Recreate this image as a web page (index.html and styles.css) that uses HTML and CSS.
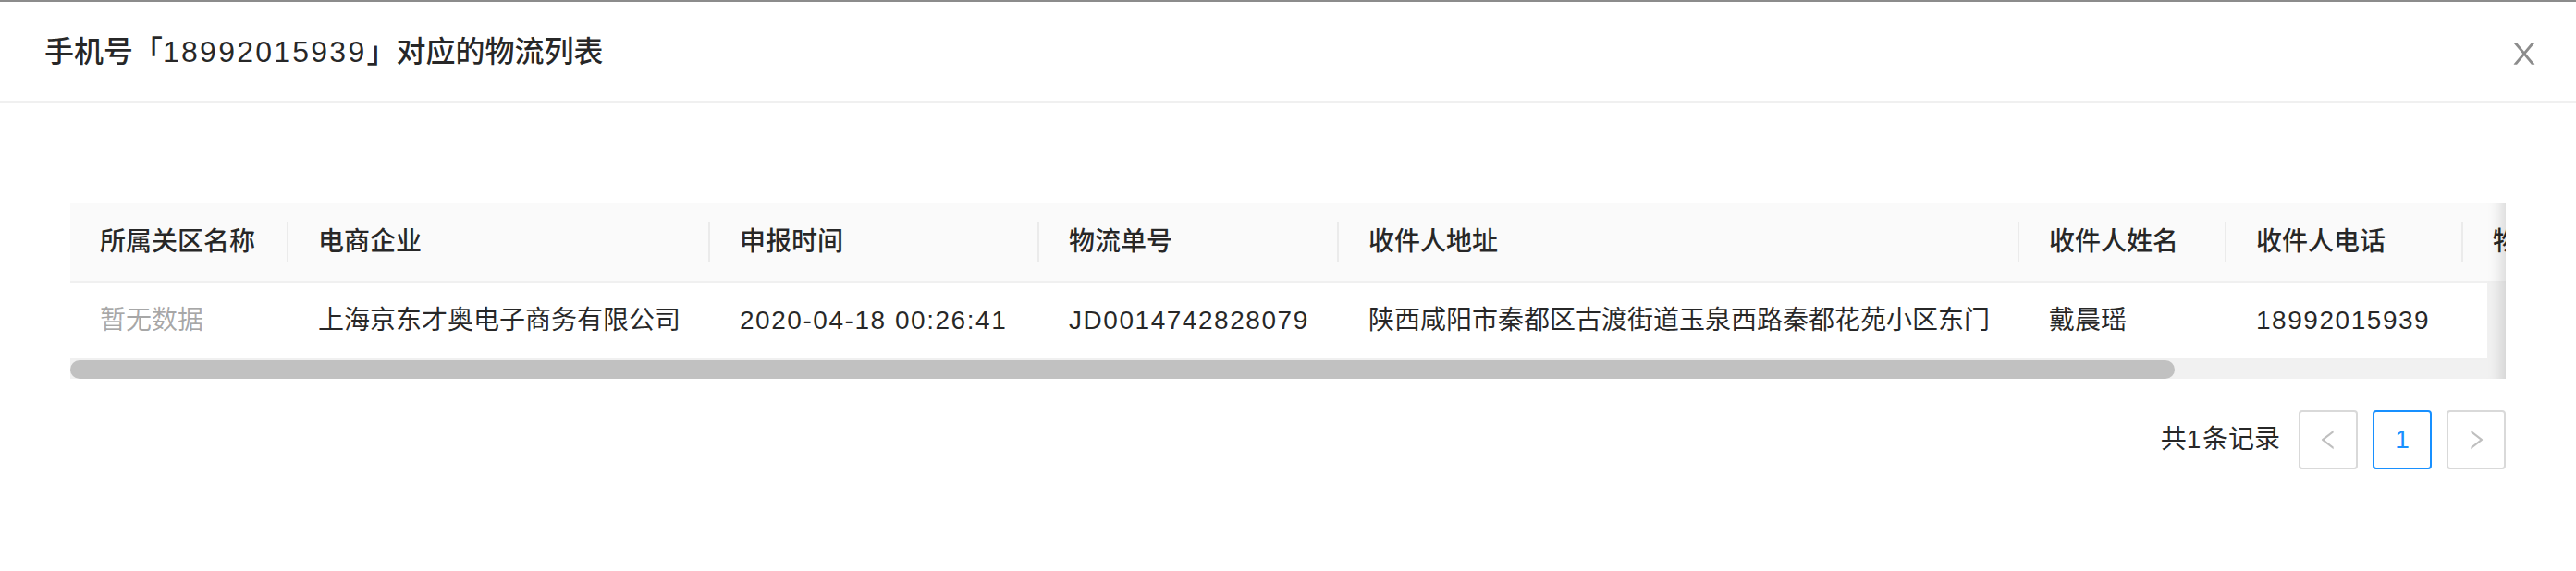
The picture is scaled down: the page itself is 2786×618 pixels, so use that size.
FILE: index.html
```html
<!DOCTYPE html>
<html lang="zh-CN">
<head>
<meta charset="utf-8">
<title>物流列表</title>
<link rel="stylesheet" href="styles.css">
</head>
<body>
<div class="topline"></div>
<div class="modal">
  <div class="modal-header">
    <div class="modal-title">手机号「<span class="num">18992015939</span>」对应的物流列表</div>
    <button class="modal-close" aria-label="Close">
      <svg viewBox="64 64 896 896" width="32" height="32"><path d="M563.8 512l262.5-312.9c4.4-5.2.7-13.1-6.1-13.1h-79.8c-4.7 0-9.2 2.1-12.3 5.7L511.6 449.8 295.1 191.7c-3-3.6-7.5-5.7-12.3-5.7H203c-6.8 0-10.5 7.9-6.1 13.1L459.4 512 196.9 824.9A7.95 7.95 0 00203 838h79.8c4.7 0 9.2-2.1 12.3-5.7l216.5-258.1 216.5 258.1c3 3.6 7.5 5.7 12.3 5.7h79.8c6.8 0 10.5-7.9 6.1-13.1L563.8 512z"/></svg>
    </button>
  </div>
  <div class="modal-body">
    <div class="table">
      <div class="thead">
        <table class="grid">
          <colgroup>
            <col class="c1"><col class="c2"><col class="c3"><col class="c4"><col class="c5"><col class="c6"><col class="c7"><col class="c8">
          </colgroup>
          <tr>
            <th>所属关区名称</th>
            <th>电商企业</th>
            <th>申报时间</th>
            <th>物流单号</th>
            <th>收件人地址</th>
            <th>收件人姓名</th>
            <th>收件人电话</th>
            <th>物流企业名称</th>
          </tr>
        </table>
      </div>
      <div class="tbody-row">
        <div class="tbody">
          <table class="grid">
            <colgroup>
              <col class="c1"><col class="c2"><col class="c3"><col class="c4"><col class="c5"><col class="c6"><col class="c7"><col class="c8">
            </colgroup>
            <tr>
              <td class="empty">暂无数据</td>
              <td>上海京东才奥电子商务有限公司</td>
              <td><span class="num">2020-04-18 00:26:41</span></td>
              <td><span class="num">JD0014742828079</span></td>
              <td>陕西咸阳市秦都区古渡街道玉泉西路秦都花苑小区东门</td>
              <td>戴晨瑶</td>
              <td><span class="num">18992015939</span></td>
              <td></td>
            </tr>
          </table>
        </div>
        <div class="vbar"></div>
      </div>
      <div class="hbar-row">
        <div class="hbar"><div class="thumb"></div></div>
        <div class="corner"></div>
      </div>
      <div class="ping-shadow"></div>
    </div>
    <div class="pagination">
      <span class="total">共<span class="num">1</span>条记录</span>
      <span class="page-btn disabled">
        <svg viewBox="64 64 896 896" width="24" height="24"><path d="M724 218.3V141c0-6.7-7.7-10.4-12.9-6.3L260.3 486.8a31.86 31.86 0 000 50.3l450.8 352.1c5.3 4.1 12.9.4 12.9-6.3v-77.3c0-4.9-2.3-9.6-6.1-12.6l-360-281 360-281.1c3.8-3 6.1-7.7 6.1-12.6z"/></svg>
      </span>
      <span class="page-btn active"><span class="num">1</span></span>
      <span class="page-btn disabled">
        <svg viewBox="64 64 896 896" width="24" height="24"><path d="M765.7 486.8L314.9 134.7A7.97 7.97 0 00302 141v77.3c0 4.9 2.3 9.6 6.1 12.6l360 281.1-360 281.1c-3.9 3-6.1 7.7-6.1 12.6V883c0 6.7 7.7 10.4 12.9 6.3l450.8-352.1a31.96 31.96 0 000-50.4z"/></svg>
      </span>
    </div>
  </div>
</div>
</body>
</html>
```
FILE: styles.css
```css
* { box-sizing: border-box; }
html, body {
  margin: 0;
  padding: 0;
  background: #ffffff;
}
body {
  font-family: "Liberation Sans", "Noto Sans CJK SC", sans-serif;
  font-size: 28px;
  color: rgba(0, 0, 0, 0.85);
  width: 2786px;
  overflow: hidden;
}
.num { letter-spacing: 0.055em; }

.topline {
  height: 2px;
  background: #8c8c8c;
}

.modal-header {
  position: relative;
  padding: 32px 48px 31px;
  border-bottom: 2px solid #f0f0f0;
}
.modal-title {
  font-size: 32px;
  line-height: 44px;
  font-weight: 500;
  color: rgba(0, 0, 0, 0.85);
  white-space: nowrap;
}
.modal-title .num { letter-spacing: 0.07em; }
.modal-close {
  position: absolute;
  top: 0;
  right: 0;
  width: 112px;
  height: 112px;
  padding: 0;
  border: 0;
  background: transparent;
  display: flex;
  align-items: center;
  justify-content: center;
}
.modal-close svg { fill: rgba(0, 0, 0, 0.45); display: block; }

.modal-body {
  padding: 109px 76px 48px;
}

.table {
  position: relative;
  overflow: hidden;
}
.thead { overflow: hidden; background: #fafafa; }
.grid {
  table-layout: fixed;
  border-collapse: collapse;
  border-spacing: 0;
  width: 2828px;
}
.c1 { width: 236px; }
.c2 { width: 456px; }
.c3 { width: 356px; }
.c4 { width: 324px; }
.c5 { width: 736px; }
.c6 { width: 224px; }
.c7 { width: 256px; }
.c8 { width: 240px; }

.grid th, .grid td {
  padding: 20px 32px;
  line-height: 44px;
  text-align: left;
  white-space: nowrap;
  overflow: hidden;
  border-bottom: 2px solid #f0f0f0;
}
.grid th {
  position: relative;
  font-weight: 500;
  background: #fafafa;
  color: rgba(0, 0, 0, 0.85);
}
.grid th::before {
  content: "";
  position: absolute;
  right: 0;
  top: 50%;
  width: 2px;
  height: 44px;
  transform: translateY(-50%);
  background: rgba(0, 0, 0, 0.06);
}
.grid th:last-child::before { display: none; }
.grid td {
  padding: 19px 32px 19px;
  background: #ffffff;
}
.grid td.empty { color: rgba(0, 0, 0, 0.35); }

.tbody-row { display: flex; }
.tbody { flex: 1; overflow: hidden; }
.vbar { width: 20px; flex: none; background: #f1f1f1; }

.hbar-row { display: flex; height: 20px; }
.hbar { flex: 1; background: #f1f1f1; }
.thumb {
  width: 2276px;
  height: 20px;
  border-radius: 10px;
  background: #c1c1c1;
}
.corner { width: 20px; flex: none; background: #f1f1f1; }

.ping-shadow {
  position: absolute;
  top: 0;
  right: 0;
  bottom: 0;
  width: 60px;
  pointer-events: none;
  box-shadow: inset -20px 0 16px -16px rgba(0, 0, 0, 0.15);
}

.pagination {
  margin-top: 34px;
  display: flex;
  justify-content: flex-end;
  align-items: center;
  gap: 16px;
}
.total {
  line-height: 64px;
  margin-right: 4px;
  color: rgba(0, 0, 0, 0.85);
}
.page-btn {
  width: 64px;
  height: 64px;
  border: 2px solid #d9d9d9;
  border-radius: 4px;
  display: flex;
  align-items: center;
  justify-content: center;
  background: #fff;
  font-size: 28px;
}
.page-btn svg { display: block; fill: rgba(0, 0, 0, 0.25); }
.page-btn.active {
  border-color: #1890ff;
  color: #1890ff;
}
.page-btn.active .num { letter-spacing: 0; }
```
